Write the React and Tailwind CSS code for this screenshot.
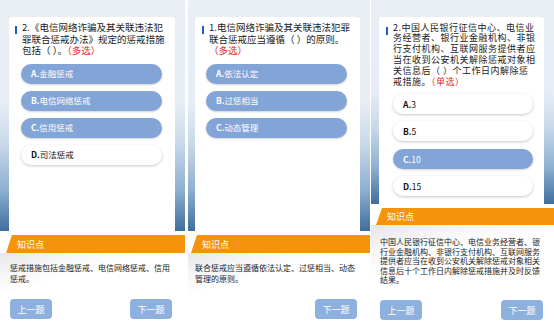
import React from "react";

const FONT = { fontFamily: '"Noto Sans CJK SC", "Noto Sans", sans-serif' };

function Option({ letter, text, selected, w }) {
  return (
    <div
      className={
        "flex h-[20px] items-center rounded-full pl-[10px] text-[8.5px] leading-none " +
        (selected
          ? "bg-[#82a4d7] text-white shadow-[0_1px_2px_rgba(0,0,0,0.18)]"
          : "bg-white text-[#111] shadow-[0_1px_3px_rgba(0,0,0,0.22)]")
      }
      style={{ width: w }}
    >
      <span className="font-bold">{letter}.</span>
      <span>{text}</span>
    </div>
  );
}

function Btn({ children }) {
  return (
    <div className="flex h-[20px] w-[42px] items-center justify-center rounded-[4px] bg-[#8db0df] text-[9px] leading-none text-white">
      {children}
    </div>
  );
}

function Band({ children }) {
  return (
    <div className="flex h-full items-center bg-[#f5940b] pl-[11px] text-[9px] leading-none text-white [clip-path:polygon(6px_0,100%_0,100%_100%,0_100%)]">
      {children}
    </div>
  );
}

const topBg =
  "bg-[linear-gradient(to_bottom,#eaeff5_0%,#e6edf5_45%,#c9d9ea_62%,#8fb0d1_82%,#3f6e9d_100%)]";
const shadowBg =
  "bg-[linear-gradient(165deg,#e6e6e6_0%,#f6f6f6_18%,#ffffff_35%)]";

function Title({ children, text }) {
  return (
    <div className="flex">
      <div className="mt-[4px] h-[8px] w-[2px] shrink-0 bg-[#1d5fc0]" />
      <p className={"ml-[5px] whitespace-nowrap text-[#1a1a1a] " + text}>{children}</p>
    </div>
  );
}

const Red = ({ children }) => <span className="text-[#e02b2b]">{children}</span>;

export default function App() {
  return (
    <div className="flex h-[327px] w-[554px] overflow-hidden bg-white" style={FONT}>
      {/* Panel 1 */}
      <div className="flex h-full w-[185px] flex-col bg-white">
        <div className={"h-[231px] pl-[9px] pr-[10px] pt-[17px] " + topBg}>
          <div className="h-full rounded-t-[3px] bg-white pl-[6px] pt-[5px]">
            <Title text="text-[9.5px] leading-[11.5px]">
              2.《电信网络诈骗及其关联违法犯<br />罪联合惩戒办法》规定的惩戒措施<br />包括（ ）。<Red>（多选）</Red>
            </Title>
            <div className="ml-[6px] mt-[7px] flex flex-col gap-[7px]">
              <Option letter="A" text="金融惩戒" selected w="141px" />
              <Option letter="B" text="电信网络惩戒" selected w="141px" />
              <Option letter="C" text="信用惩戒" selected w="141px" />
              <Option letter="D" text="司法惩戒" w="141px" />
            </div>
          </div>
        </div>
        <div className="mt-[4px] ml-[6px] h-[18px]">
          <Band>知识点</Band>
        </div>
        <div className={"flex flex-1 flex-col " + shadowBg}>
          <p className="whitespace-nowrap pl-[10px] pt-[9px] text-[8px] leading-[11px] text-[#222]">
            惩戒措施包括金融惩戒、电信网络惩戒、信用<br />惩戒。
          </p>
          <div className="mt-auto flex justify-between pb-[8px] pl-[10px] pr-[13px]">
            <Btn>上一题</Btn>
            <Btn>下一题</Btn>
          </div>
        </div>
      </div>

      <div className="w-[3px] bg-white" />

      {/* Panel 2 */}
      <div className="flex h-full w-[182px] flex-col bg-white">
        <div className={"h-[231px] pl-[7px] pr-[10px] pt-[17px] " + topBg}>
          <div className="h-full rounded-t-[3px] bg-white pl-[7px] pt-[5px]">
            <Title text="text-[9.5px] leading-[11.5px]">
              1.电信网络诈骗及其关联违法犯罪<br />联合惩戒应当遵循（ ）的原则。<br /><Red>（多选）</Red>
            </Title>
            <div className="ml-[4px] mt-[7px] flex flex-col gap-[7px]">
              <Option letter="A" text="依法认定" selected w="141px" />
              <Option letter="B" text="过惩相当" selected w="141px" />
              <Option letter="C" text="动态管理" selected w="141px" />
            </div>
          </div>
        </div>
        <div className="mt-[4px] ml-[3px] h-[18px]">
          <Band>知识点</Band>
        </div>
        <div className={"flex flex-1 flex-col " + shadowBg}>
          <p className="whitespace-nowrap pl-[7px] pt-[9px] text-[8px] leading-[11px] text-[#222]">
            联合惩戒应当遵循依法认定、过惩相当、动态<br />管理的原则。
          </p>
          <div className="mt-auto flex justify-end pb-[8px] pr-[13px]">
            <Btn>下一题</Btn>
          </div>
        </div>
      </div>

      <div className="w-[1px] bg-white" />

      {/* Panel 3 */}
      <div className="flex h-full w-[183px] flex-col bg-white">
        <div className={"h-[204px] pl-[8px] pr-[10px] pt-[17px] " + topBg}>
          <div className="h-full rounded-t-[3px] bg-white pl-[7px] pt-[5.5px]">
            <Title text="text-[9px] leading-[10.9px] tracking-[0.5px]">
              2.中国人民银行征信中心、电信业<br />务经营者、银行业金融机构、非银<br />行支付机构、互联网服务提供者应<br />当在收到公安机关解除惩戒对象相<br />关信息后（ ）个工作日内解除惩<br />戒措施。<Red>（单选）</Red>
            </Title>
            <div className="ml-[7px] mt-[6px] flex flex-col gap-[7.5px]">
              <Option letter="A" text="3" w="140px" />
              <Option letter="B" text="5" w="140px" />
              <Option letter="C" text="10" selected w="140px" />
              <Option letter="D" text="15" w="140px" />
            </div>
          </div>
        </div>
        <div className="mt-[4px] ml-[5px] h-[17px]">
          <Band>知识点</Band>
        </div>
        <div className={"flex flex-1 flex-col " + shadowBg}>
          <p className="whitespace-nowrap pl-[9px] pt-[12px] text-[8px] leading-[9.6px] text-[#222]">
            中国人民银行征信中心、电信业务经营者、银<br />行业金融机构、非银行支付机构、互联网服务<br />提供者应当在收到公安机关解除惩戒对象相关<br />信息后十个工作日内解除惩戒措施并及时反馈<br />结果。
          </p>
          <div className="mt-auto flex justify-between pb-[7px] pl-[9px] pr-[11px]">
            <Btn>上一题</Btn>
            <Btn>下一题</Btn>
          </div>
        </div>
      </div>
    </div>
  );
}
